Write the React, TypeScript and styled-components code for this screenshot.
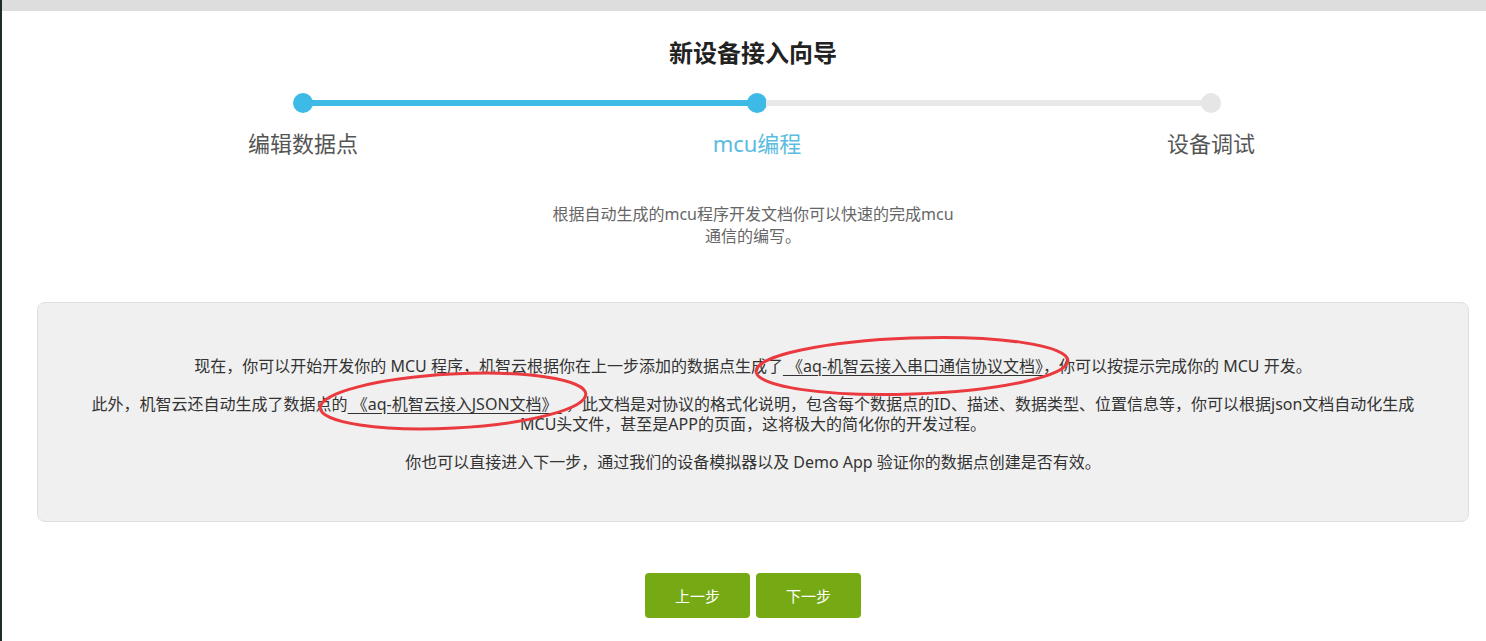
import React from 'react';
import styled, { createGlobalStyle, css } from 'styled-components';

const GlobalStyle = createGlobalStyle`
  html, body {
    margin: 0;
    padding: 0;
    background: #ffffff;
  }
  body {
    border-left: 2px solid #1e2b2a;
    font-family: "Noto Sans", "Noto Sans CJK SC", sans-serif;
    color: #333;
  }
`;

const BLUE = '#3dbbe6';
const GREY_TRACK = '#e8e8e8';

type StepState = 'done' | 'current' | 'todo';

interface StepDef {
  label: string;
  state: StepState;
  left?: 'blue' | 'grey';
  right?: 'blue' | 'grey';
}

const STEPS: StepDef[] = [
  { label: '编辑数据点', state: 'done', right: 'blue' },
  { label: 'mcu编程', state: 'current', left: 'blue', right: 'grey' },
  { label: '设备调试', state: 'todo', left: 'grey' },
];

const App: React.FC = () => {
  return (
    <>
      <GlobalStyle />
      <TopBar />
      <Page>
        <Title>新设备接入向导</Title>

        <Stepper>
          {STEPS.map((step) => (
            <Step key={step.label}>
              <Track>
                <TrackHalf $color={step.left} />
                <Dot $state={step.state} />
                <TrackHalf $color={step.right} />
              </Track>
              <StepLabel $active={step.state === 'current'}>{step.label}</StepLabel>
            </Step>
          ))}
        </Stepper>

        <Intro>根据自动生成的mcu程序开发文档你可以快速的完成mcu通信的编写。</Intro>

        <Panel>
          <Para>
            现在，你可以开始开发你的 MCU 程序，机智云根据你在上一步添加的数据点生成了
            <DocLink>&nbsp;《aq-机智云接入串口通信协议文档》</DocLink>，你可以按提示完成你的 MCU 开发。
          </Para>
          <Para>
            此外，机智云还自动生成了数据点的
            <DocLink>&nbsp;《aq-机智云接入JSON文档》&nbsp;</DocLink>
            &nbsp;，此文档是对协议的格式化说明，包含每个数据点的ID、描述、数据类型、位置信息等，你可以根据json文档自动化生成
            <br />
            MCU头文件，甚至是APP的页面，这将极大的简化你的开发过程。
          </Para>
          <Para>你也可以直接进入下一步，通过我们的设备模拟器以及 Demo App 验证你的数据点创建是否有效。</Para>

          {/* hand-drawn annotation rings over the two links */}
          <Annotations viewBox="0 0 1432 220" width="1432" height="220">
            <ellipse cx="875" cy="64" rx="156" ry="28" transform="rotate(-2 875 64)" />
            <ellipse cx="416" cy="99" rx="133" ry="27" transform="rotate(-3 416 99)" />
          </Annotations>
        </Panel>

        <Actions>
          <Button>上一步</Button>
          <Button>下一步</Button>
        </Actions>
      </Page>
    </>
  );
};

// --- Styled Components ---

const TopBar = styled.div`
  height: 11px;
  background: #dddddd;
`;

const Page = styled.main`
  display: flex;
  flex-direction: column;
  align-items: center;
  padding: 0 17px 40px 35px;
`;

const Title = styled.h1`
  margin: 25px 0 0;
  font-size: 24px;
  line-height: 34px;
  font-weight: 700;
  color: #222;
`;

const Stepper = styled.div`
  display: flex;
  width: 1362px;
  margin: 23px 0 0 8px;
`;

const Step = styled.div`
  flex: 1;
  display: flex;
  flex-direction: column;
  align-items: center;
`;

const Track = styled.div`
  display: flex;
  align-items: center;
  width: 100%;
  height: 20px;
`;

const TrackHalf = styled.div<{ $color?: 'blue' | 'grey' }>`
  flex: 1;
  height: 6px;
  background: ${(p) => (p.$color === 'blue' ? BLUE : p.$color === 'grey' ? GREY_TRACK : 'transparent')};
`;

const Dot = styled.span<{ $state: StepState }>`
  width: 20px;
  height: 20px;
  border-radius: 50%;
  flex-shrink: 0;
  margin: 0 -1px;
  background: ${(p) => (p.$state === 'todo' ? '#e6e6e6' : BLUE)};
`;

const StepLabel = styled.div<{ $active: boolean }>`
  margin-top: 15px;
  font-size: 22px;
  line-height: 30px;
  color: #555;
  ${(p) =>
    p.$active &&
    css`
      color: #5bbce1;
    `}
`;

const Intro = styled.p`
  margin: 45px 0 0;
  width: 412px;
  text-align: center;
  font-size: 16px;
  line-height: 22px;
  color: #666;
`;

const Panel = styled.section`
  position: relative;
  box-sizing: border-box;
  width: 100%;
  height: 220px;
  margin-top: 55px;
  padding: 53px 20px 0;
  display: flex;
  flex-direction: column;
  align-items: center;
  gap: 18px;
  background: #f0f0f0;
  border: 1px solid #dedede;
  border-radius: 8px;
`;

const Para = styled.p`
  margin: 0;
  text-align: center;
  font-size: 16px;
  line-height: 20px;
  color: #333;
  white-space: nowrap;
`;

const DocLink = styled.a`
  color: #333;
  text-decoration: underline;
  text-underline-offset: 3px;
  cursor: pointer;
`;

const Annotations = styled.svg`
  position: absolute;
  left: -1px;
  top: -1px;
  pointer-events: none;
  overflow: visible;

  ellipse {
    fill: none;
    stroke: #ea3a3f;
    stroke-width: 3;
  }
`;

const Actions = styled.div`
  display: flex;
  gap: 6px;
  margin-top: 51px;
`;

const Button = styled.button`
  width: 105px;
  height: 45px;
  border: none;
  border-radius: 4px;
  background: #76aa14;
  color: #fff;
  font-family: "Noto Sans", "Noto Sans CJK SC", sans-serif;
  font-size: 15px;
  cursor: pointer;
`;

export default App;
